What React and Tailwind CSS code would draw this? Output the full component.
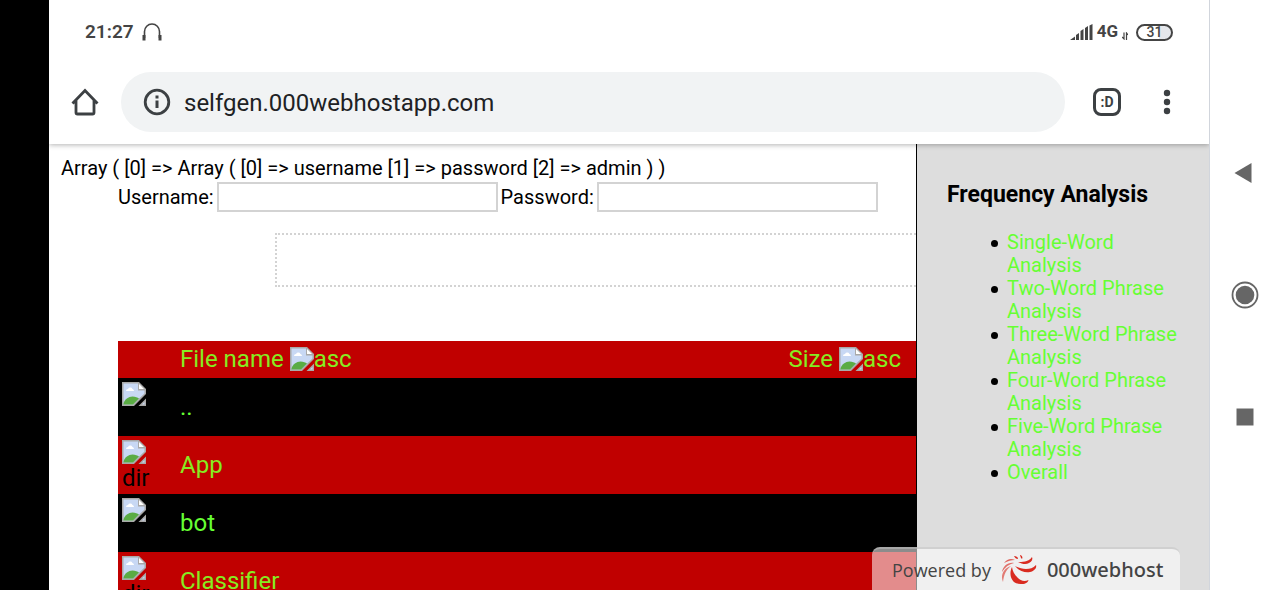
const analyses = [
  "Single-Word Analysis",
  "Two-Word Phrase Analysis",
  "Three-Word Phrase Analysis",
  "Four-Word Phrase Analysis",
  "Five-Word Phrase Analysis",
  "Overall",
];

const files = [
  { name: "..", alt: "" },
  { name: "App", alt: "dir" },
  { name: "bot", alt: "" },
  { name: "Classifier", alt: "dir" },
];

function BrokenImage() {
  return (
    <svg viewBox="0 0 24 24" className="h-6 w-6 shrink-0" aria-hidden="true">
      <path d="M0 0h17l7 7v5L12 24H0z" fill="#a9a9a9" />
      <path d="M1.5 1.5h14.500v7h6.500v3L11 22.500H1.500z" fill="#c8d8f4" />
      <path d="M4 9a2 2 0 0 1 2-2 2.500 2.500 0 0 1 4.500 0A2 2 0 0 1 12 9z" fill="#fff" />
      <path d="M1.500 22.500v-1c1-4 5-7 9-7 3 0 5 1 6.500 2L11 22.500z" fill="#5aac44" />
      <path d="M17 2v5h5z" fill="#fff" />
      <path d="M24 16.500V24h-7.500z" fill="#a9a9a9" />
      <path d="M22.500 20v2.500H20z" fill="#c8d8f4" />
    </svg>
  );
}

function StatusBar() {
  return (
    <div className="flex h-16 items-center justify-between px-9 text-[#444]">
      <div className="flex items-center gap-2">
        <span className="text-[19px] font-semibold">21:27</span>
        <svg viewBox="0 0 20 18" className="h-[18px] w-5" fill="none" stroke="currentColor">
          <path d="M2.500 15V8.500a7.500 7.500 0 0 1 15 0V15" strokeWidth="1.600" />
          <path d="M2 12v5.500M18 12v5.500" strokeWidth="3" />
        </svg>
      </div>
      <div className="flex items-center gap-1">
        <svg viewBox="0 0 23 16" className="h-4 w-[23px]" fill="currentColor">
          <path d="M0 16l5-3.500V16zM6 11l3-2v7H6zM10.500 7l3-2v11h-3zM15 4l3-2v14h-3zM19.500 1.500L22.500 0v16h-3z" />
        </svg>
        <span className="text-[17px] font-bold">4G</span>
        <svg viewBox="0 0 6 8" className="mt-2 h-2 w-[6px]" fill="none" stroke="currentColor" strokeWidth="1.200">
          <path d="M2 0.500v6.500L0 5M4.500 8V1L6 3" />
        </svg>
        <div className="ml-1 flex h-[17px] w-[37px] items-center justify-center rounded-full border-2 border-[#444] bg-linear-to-r from-white from-65% to-gray-200 to-65% text-sm leading-none font-medium">
          31
        </div>
      </div>
    </div>
  );
}

function AddressBar() {
  return (
    <div className="flex h-20 items-start pt-2 pr-[38px] pl-[22px] text-[#3c4043]">
      <button aria-label="Home" className="mt-4 mr-[22px]">
        <svg viewBox="0 0 28 28" className="h-7 w-7" fill="none" stroke="currentColor" strokeWidth="2.800">
          <path d="M1.500 15.500L14 2.500l12.500 13M5 12.500v12q0 1.500 1.500 1.500h15q1.500 0 1.500-1.500v-12" />
        </svg>
      </button>
      <div className="flex h-15 flex-1 items-center gap-[13px] rounded-full bg-[#f1f3f4] px-[22px]">
        <svg viewBox="0 0 28 28" className="h-7 w-7 shrink-0" fill="none" stroke="currentColor" strokeWidth="2.800">
          <circle cx="14" cy="14" r="11.800" />
          <path d="M14 12.500V20M14 7.500v3" strokeWidth="3" />
        </svg>
        <input
          aria-label="Address"
          defaultValue="selfgen.000webhostapp.com"
          className="min-w-0 flex-1 bg-transparent pt-[2px] text-2xl text-[#202124] outline-none"
        />
      </div>
      <button
        aria-label="Tabs"
        className="mt-4 ml-7 h-7 w-7 rounded-lg border-3 border-[#3c4043] text-sm leading-none font-bold"
      >
        :D
      </button>
      <button aria-label="Menu" className="mt-4 ml-[42px]">
        <svg viewBox="0 0 8 28" className="h-7 w-2" fill="currentColor">
          <circle cx="4" cy="5" r="3.200" />
          <circle cx="4" cy="14" r="3.200" />
          <circle cx="4" cy="23" r="3.200" />
        </svg>
      </button>
    </div>
  );
}

function FileTable() {
  return (
    <table className="w-full border-collapse text-2xl text-[#66ff33]">
      <thead>
        <tr className="h-[37px] bg-[#c00000] text-[#86ec22]">
          <th className="w-[58px]" />
          <th className="pb-[2px] pl-1 text-left font-normal">
            <a href="#name" className="flex items-center leading-7">
              File name&nbsp;<BrokenImage />asc
            </a>
          </th>
          <th className="pr-[15px] pb-[2px] font-normal">
            <a href="#size" className="flex items-center justify-end leading-7">
              Size&nbsp;<BrokenImage />asc
            </a>
          </th>
        </tr>
      </thead>
      <tbody>
        {files.map((file) => (
          <tr key={file.name} className="h-[58px] odd:bg-black even:bg-[#c00000] even:text-[#86ec22]">
            <td className="pt-1 pl-1 align-top">
              <BrokenImage />
              <span className="block leading-7 text-black">{file.alt}</span>
            </td>
            <td className="pl-1 leading-7">
              <a href="#file">{file.name}</a>
            </td>
            <td />
          </tr>
        ))}
      </tbody>
    </table>
  );
}

function Sidebar() {
  return (
    <aside className="w-[293px] shrink-0 border-l border-black bg-[#ddd] pt-9 pl-[30px]">
      <h2 className="text-[23px] leading-[30px] font-bold">Frequency Analysis</h2>
      <ul className="mt-[21px] pr-7 pl-11 text-[20px] leading-[23px]">
        {analyses.map((item) => (
          <li key={item} className="flex items-start gap-[9px]">
            <span className="mt-[9px] h-[7px] w-[7px] shrink-0 rounded-full bg-black" />
            <a href="#analysis" className="text-[#66ff33]">{item}</a>
          </li>
        ))}
      </ul>
    </aside>
  );
}

function HostBadge() {
  return (
    <a
      href="#host"
      className="absolute right-[29px] bottom-0 flex h-[43px] w-[308px] items-center rounded-t-lg border-t-2 border-[#bbb]/60 bg-white/55 pl-5 font-['Open_Sans',sans-serif] text-lg text-[#444]"
    >
      Powered by
      <svg viewBox="0 0 36 30" className="mx-[10px] h-[30px] w-9 shrink-0" fill="#d92b20">
        <path d="M11 12C7 20 11 30 21 29c4 0 6-2 6.500-4-4 2-8 1-11-2.500-3-3-5-6-5.500-10.500z" />
        <path d="M14 11c4 5 10 7 15 6 4-1 7-4 6-7-3 3-6 4-10 4-4-.2-7-1-11-3z" />
        <path d="M17 7c4 2 8 3 11 1 3-1.500 4-4 3-6-2 3-5 4-7 4.500-3 .500-5 .500-7 .500z" />
        <path d="M19 0c2 .5 3 2 2 4-1-1-1.500-2-2-4zM13 1c2 0 4 1 4 3-2 0-3-1-4-3z" />
        <path d="M3 8c3-4 7-5 11-3-4 0-7 1-11 3z" opacity=".7" />
        <path d="M1 17C2 11 7 7 13 8 8 9 4 12 1 17z" opacity=".65" />
        <path d="M2 27C-1 20 3 13 10 11 5 15 3 19 2 27z" opacity=".6" />
      </svg>
      <span className="font-['Noto_Sans',sans-serif] text-[20px] font-medium">000webhost</span>
    </a>
  );
}

function NavKeys() {
  return (
    <nav className="flex w-[70px] shrink-0 flex-col items-center justify-center gap-[94px] text-[#666]">
      <button aria-label="Back">
        <svg viewBox="0 0 28 28" className="h-7 w-7" fill="currentColor">
          <path d="M3.500 14L20.500 4v20z" />
        </svg>
      </button>
      <button aria-label="Home screen">
        <svg viewBox="0 0 28 28" className="h-7 w-7" fill="currentColor">
          <circle cx="14" cy="14" r="9.300" />
          <circle cx="14" cy="14" r="12.500" fill="none" stroke="currentColor" strokeWidth="1.800" />
        </svg>
      </button>
      <button aria-label="Recent apps">
        <svg viewBox="0 0 28 28" className="h-7 w-7" fill="currentColor">
          <path d="M5.500 5.500h17v17h-17z" />
        </svg>
      </button>
    </nav>
  );
}

export default function App() {
  return (
    <div className="flex h-screen overflow-hidden bg-white font-[Roboto,sans-serif] text-black">
      <div className="w-[49px] shrink-0 bg-black" />
      <div className="relative flex min-w-0 flex-1 flex-col overflow-hidden border-r border-gray-300">
        <header className="z-10 shrink-0 bg-white shadow-[0_1px_5px_rgba(0,0,0,0.3)]">
          <StatusBar />
          <AddressBar />
        </header>
        <div className="flex min-h-0 flex-1">
          <main className="min-w-0 flex-1 overflow-hidden pt-3 text-[20px] leading-6">
            <p className="pl-3">Array ( [0] =&gt; Array ( [0] =&gt; username [1] =&gt; password [2] =&gt; admin ) )</p>
            <form className="mt-[2px] ml-[69px] flex items-center gap-[3px]">
              <label htmlFor="username">Username:</label>
              <input id="username" className="h-[30px] w-[281px] border-2 border-[#d3d3d3] px-1" />
              <label htmlFor="password">Password:</label>
              <input id="password" type="password" className="h-[30px] w-[281px] border-2 border-[#d3d3d3] px-1" />
            </form>
            <div className="mt-[21px] ml-[226px] h-[54px] border-2 border-r-0 border-dotted border-[#d3d3d3]" />
            <div className="mt-[54px] ml-[69px]">
              <FileTable />
            </div>
          </main>
          <Sidebar />
        </div>
        <HostBadge />
      </div>
      <NavKeys />
    </div>
  );
}
